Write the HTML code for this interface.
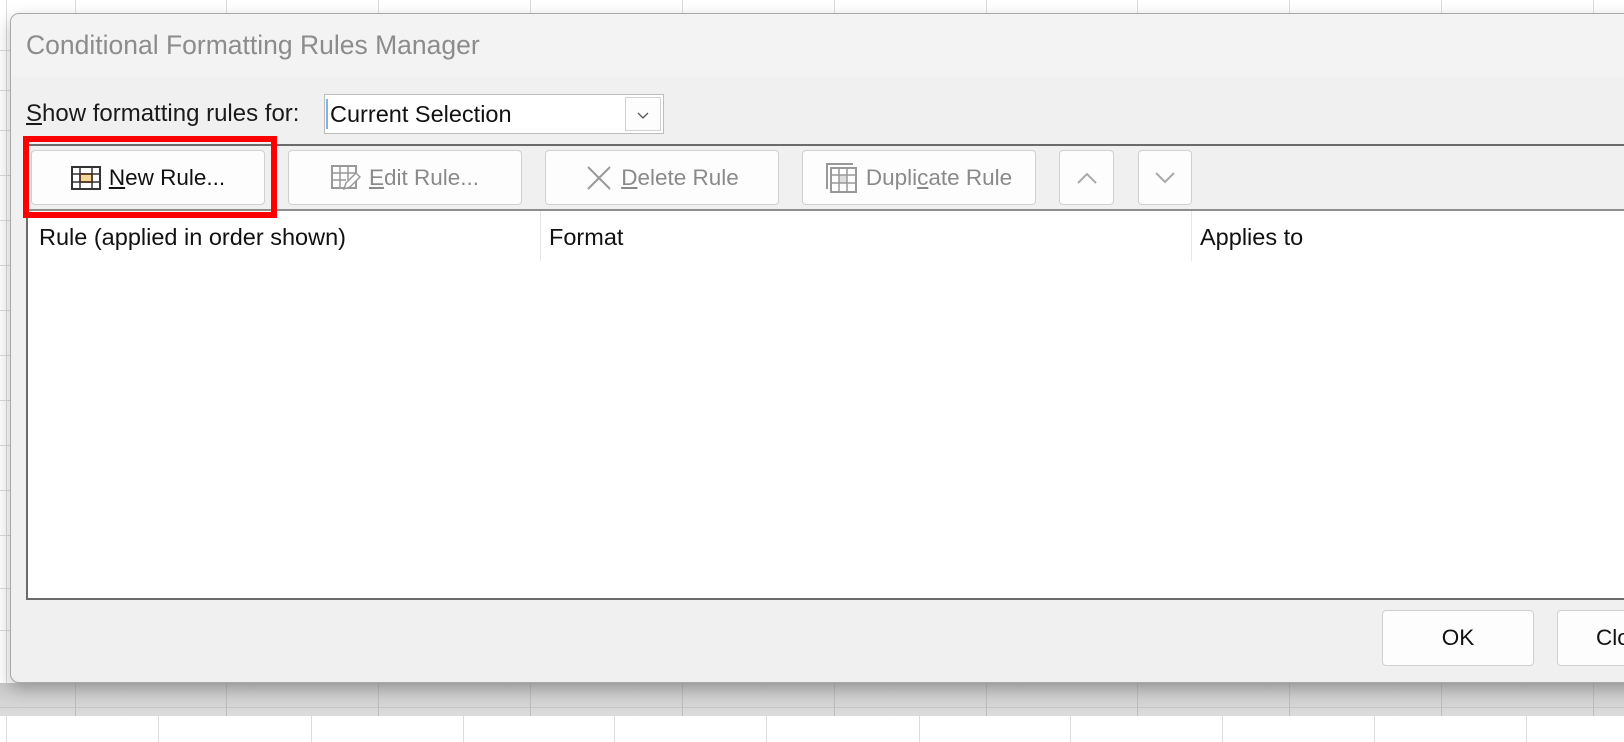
<!DOCTYPE html>
<html><head><meta charset="utf-8"><style>
*{margin:0;padding:0;box-sizing:border-box}
body{width:1624px;height:742px;position:relative;overflow:hidden;background:#fff;font-family:"Liberation Sans",sans-serif;}
.abs{position:absolute}
.vl{position:absolute;width:1px;background:#dcdcdc}
.hl{position:absolute;height:1px;background:#dcdcdc}
.dlg{position:absolute;left:10px;top:13px;width:1640px;height:670px;background:#f0f0f0;border:1px solid #a8a8a8;border-radius:9px;box-shadow:0 6px 16px rgba(0,0,0,.25);overflow:hidden}
.t{position:absolute;white-space:nowrap}
.btn{position:absolute;top:136px;height:55px;background:#fdfdfd;border:1px solid #d0d0d0;border-radius:4px;font-size:22.5px;color:#8a8a8a;display:flex;align-items:center;justify-content:center;gap:8px}
</style></head><body>
<div class="abs" style="left:0;top:683px;width:1624px;height:33px;background:linear-gradient(#c9c9c9,#dcdcdc)"></div>
<div class="hl" style="left:0;top:707px;width:1624px;background:#c4c4c4"></div>
<div class="vl" style="left:75px;top:0;height:13px"></div><div class="vl" style="left:226px;top:0;height:13px"></div><div class="vl" style="left:378px;top:0;height:13px"></div><div class="vl" style="left:530px;top:0;height:13px"></div><div class="vl" style="left:682px;top:0;height:13px"></div><div class="vl" style="left:834px;top:0;height:13px"></div><div class="vl" style="left:986px;top:0;height:13px"></div><div class="vl" style="left:1137px;top:0;height:13px"></div><div class="vl" style="left:1289px;top:0;height:13px"></div><div class="vl" style="left:1441px;top:0;height:13px"></div><div class="vl" style="left:1593px;top:0;height:13px"></div>
<div class="vl" style="left:75px;top:683px;height:33px;background:#bcbcbc"></div><div class="vl" style="left:226px;top:683px;height:33px;background:#bcbcbc"></div><div class="vl" style="left:378px;top:683px;height:33px;background:#bcbcbc"></div><div class="vl" style="left:530px;top:683px;height:33px;background:#bcbcbc"></div><div class="vl" style="left:682px;top:683px;height:33px;background:#bcbcbc"></div><div class="vl" style="left:834px;top:683px;height:33px;background:#bcbcbc"></div><div class="vl" style="left:986px;top:683px;height:33px;background:#bcbcbc"></div><div class="vl" style="left:1137px;top:683px;height:33px;background:#bcbcbc"></div><div class="vl" style="left:1289px;top:683px;height:33px;background:#bcbcbc"></div><div class="vl" style="left:1441px;top:683px;height:33px;background:#bcbcbc"></div><div class="vl" style="left:1593px;top:683px;height:33px;background:#bcbcbc"></div>
<div class="vl" style="left:6px;top:716px;height:26px"></div><div class="vl" style="left:158px;top:716px;height:26px"></div><div class="vl" style="left:311px;top:716px;height:26px"></div><div class="vl" style="left:463px;top:716px;height:26px"></div><div class="vl" style="left:614px;top:716px;height:26px"></div><div class="vl" style="left:766px;top:716px;height:26px"></div><div class="vl" style="left:919px;top:716px;height:26px"></div><div class="vl" style="left:1070px;top:716px;height:26px"></div><div class="vl" style="left:1222px;top:716px;height:26px"></div><div class="vl" style="left:1374px;top:716px;height:26px"></div><div class="vl" style="left:1526px;top:716px;height:26px"></div>
<div class="vl" style="left:6px;top:0;height:683px"></div>
<div class="hl" style="left:0;top:50px;width:10px"></div><div class="hl" style="left:0;top:90px;width:10px"></div><div class="hl" style="left:0;top:130px;width:10px"></div><div class="hl" style="left:0;top:175px;width:10px"></div><div class="hl" style="left:0;top:220px;width:10px"></div><div class="hl" style="left:0;top:265px;width:10px"></div><div class="hl" style="left:0;top:310px;width:10px"></div><div class="hl" style="left:0;top:355px;width:10px"></div><div class="hl" style="left:0;top:400px;width:10px"></div><div class="hl" style="left:0;top:445px;width:10px"></div><div class="hl" style="left:0;top:490px;width:10px"></div><div class="hl" style="left:0;top:535px;width:10px"></div><div class="hl" style="left:0;top:588px;width:10px"></div><div class="hl" style="left:0;top:630px;width:10px"></div>

<div class="dlg">
  <div class="abs" style="left:0;top:0;width:100%;height:63px;background:#f3f3f3"></div>
  <div class="t" style="left:15px;top:16px;font-size:26.5px;color:#8c8c8c">Conditional Formatting Rules Manager</div>
  <div class="t" style="left:15px;top:86px;font-size:24px;color:#1a1a1a"><u>S</u>how formatting rules for:</div>
  <div class="abs" style="left:313px;top:80px;width:340px;height:40px;background:#fff;border:1px solid #bdbdbd">
    <div class="abs" style="left:1px;top:4px;width:2px;height:30px;background:#7fb2e5"></div>
    <div class="t" style="left:5px;top:6px;font-size:23.5px;color:#111">Current Selection</div>
    <div class="abs" style="right:2px;top:2px;width:36px;height:34px;border:1px solid #d0d0d0;background:#fdfdfd">
      <svg width="36" height="34" style="position:absolute;left:0;top:0"><path d="M12 15l5 5 5-5" stroke="#555" stroke-width="1.3" fill="none"/></svg>
    </div>
  </div>
  <div class="abs" style="left:15px;top:130px;width:1700px;height:456px;border:2px solid #6b6b6b;background:#f0f0f0"></div>
  <div class="abs" style="left:17px;top:195px;width:1700px;height:389px;background:#fff;border-top:2px solid #8e8e8e"></div>
  <div class="vl" style="left:529px;top:197px;height:50px;background:#e6e6e6"></div>
  <div class="vl" style="left:1180px;top:197px;height:50px;background:#e6e6e6"></div>
  <div class="t" style="left:28px;top:210px;font-size:23.5px;color:#111">Rule (applied in order shown)</div>
  <div class="t" style="left:538px;top:210px;font-size:23.5px;color:#111">Format</div>
  <div class="t" style="left:1189px;top:210px;font-size:23.5px;color:#111">Applies to</div>
  <div class="btn" style="left:20px;width:234px;color:#111">
    <svg width="30" height="24"><rect x="1" y="1" width="28" height="22" fill="#fff" stroke="#333" stroke-width="2"/><rect x="9" y="8" width="12" height="8" fill="#f6d79a" stroke="#e07010" stroke-width="2"/><path d="M9 1v22M21 1v22M1 8h28M1 16h28" stroke="#333" stroke-width="1.5"/></svg>
    <span><u>N</u>ew Rule...</span></div>
  <div class="btn" style="left:277px;width:234px">
    <svg width="30" height="26"><rect x="1" y="1" width="24" height="22" fill="none" stroke="#999" stroke-width="2"/><path d="M9 1v22M17 1v14M1 8h24M1 15h14" stroke="#999" stroke-width="1.5"/><path d="M13 24l2-6 10-10 4 4-10 10z" fill="#fff" stroke="#999" stroke-width="1.5"/></svg>
    <span><u>E</u>dit Rule...</span></div>
  <div class="btn" style="left:534px;width:234px">
    <svg width="28" height="28"><path d="M3 3l22 22M25 3L3 25" stroke="#999" stroke-width="2"/></svg>
    <span><u>D</u>elete Rule</span></div>
  <div class="btn" style="left:791px;width:234px">
    <svg width="32" height="30"><path d="M1 26V1h26" stroke="#999" stroke-width="2" fill="none"/><rect x="5" y="5" width="25" height="24" fill="#fff" stroke="#999" stroke-width="2"/><rect x="13" y="12" width="8" height="8" fill="#ddd"/><path d="M13 5v24M21 5v24M5 12h25M5 20h25" stroke="#999" stroke-width="1.5"/></svg>
    <span>Dupli<u>c</u>ate Rule</span></div>
  <div class="btn" style="left:1048px;width:55px"><svg width="24" height="14"><path d="M3 12l9-9 9 9" stroke="#aaa" stroke-width="2" fill="none"/></svg></div>
  <div class="btn" style="left:1127px;width:54px"><svg width="24" height="14"><path d="M3 2l9 9 9-9" stroke="#aaa" stroke-width="2" fill="none"/></svg></div>
  <div class="abs" style="left:12px;top:122px;width:254px;height:82px;border:6px solid #f00"></div>
  <div class="btn" style="left:1371px;top:596px;width:152px;height:56px;color:#111">OK</div>
  <div class="btn" style="left:1546px;top:596px;width:152px;height:56px;color:#111;justify-content:flex-start;padding-left:38px">Close</div>
</div>
</body></html>
